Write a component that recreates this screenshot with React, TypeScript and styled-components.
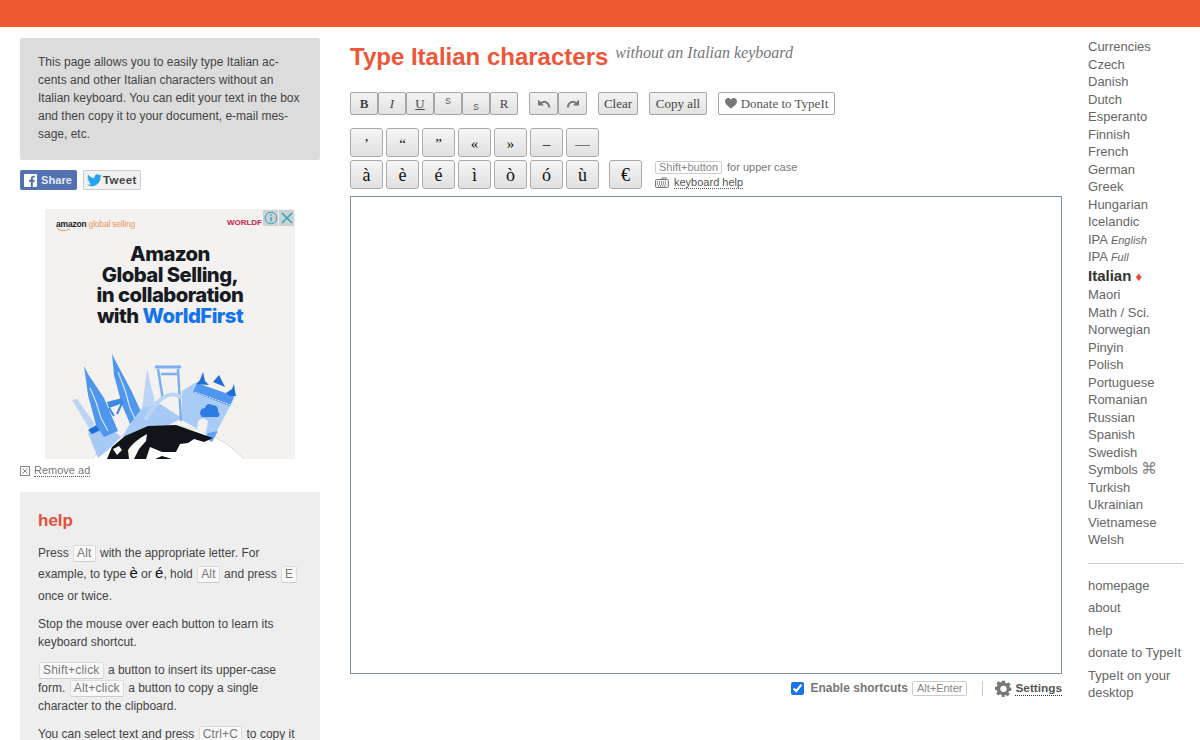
import React from "react";
import styled, { createGlobalStyle } from "styled-components";

const Global = createGlobalStyle`
  html, body { margin: 0; padding: 0; background: #fff; overflow: hidden; }
  body { font-family: "Liberation Sans", Arial, sans-serif; color: #444; }
`;

const Page = styled.div`height: 740px; overflow: hidden;`;
const TopBar = styled.div`height: 27px; background: #f05831;`;
const Columns = styled.div`
  display: grid;
  grid-template-columns: 300px 712px 95px;
  column-gap: 30px;
  padding: 11px 0 0 20px;
  & > nav { margin-left: -4px; }
`;
const Left = styled.aside`display: flex; flex-direction: column; align-items: flex-start;`;
const Intro = styled.div`
  box-sizing: border-box;
  width: 300px; height: 122px;
  padding: 15px 18px;
  background: #dcdcdc;
  border-radius: 2px;
  font-size: 12px;
  line-height: 18px;
  color: #444;
`;
const Social = styled.div`display: flex; gap: 6px; margin-top: 10px;`;
const Share = styled.div`
  box-sizing: border-box;
  width: 57px; height: 20px;
  display: flex; align-items: center; gap: 4px;
  padding-left: 4px;
  background: #5271b3;
  border-radius: 2px;
  color: #e4e8f4;
  font-size: 11px; font-weight: 700;
  letter-spacing: .1px;
`;
const Tweet = styled.div`
  box-sizing: border-box;
  width: 58px; height: 20px;
  display: flex; align-items: center; gap: 1px;
  padding-left: 3px;
  background: #f1f1f1;
  border: 1px solid #ccc;
  border-radius: 2px;
  color: #444;
  font-size: 11.5px; font-weight: 700;
  letter-spacing: .4px;
`;
const Ad = styled.div`
  position: relative;
  box-sizing: border-box;
  width: 250px; height: 250px;
  margin: 19px 0 0 25px;
  background: #f3f2f0;
  overflow: hidden;
  display: flex; flex-direction: column;
`;
const AdTop = styled.div`
  display: flex; justify-content: space-between; align-items: center;
  padding: 8px 33px 0 11px;
  height: 14px;
`;
const AdBrand = styled.span`
  position: relative;
  font-size: 8.5px; color: #e8975c; letter-spacing: -.2px;
  b { color: #222; }
  svg { position: absolute; left: 0; top: 9px; }
`;
const AdWorld = styled.span`font-size: 8px; font-weight: 700; color: #c8264f; margin-top: -3px;`;
const AdClose = styled.div`
  position: absolute; top: 1px; right: 1px;
  display: flex; gap: 1px;
`;
const AdIcon = styled.div`
  width: 15px; height: 16px;
  background: #cfd1d1;
  display: flex; align-items: center; justify-content: center;
`;
const AdHead = styled.div`
  margin-top: 13px;
  text-align: center;
  font-family: Inter, "Liberation Sans", sans-serif;
  font-size: 20.3px; font-weight: 800; line-height: 20.6px;
  letter-spacing: -.55px;
  color: #161a22;
  span { color: #1273eb; }
`;
const AdArt = styled.svg`display: block; margin-top: auto; flex: none;`;
const RemoveRow = styled.div`
  display: flex; align-items: center; gap: 4px;
  margin-top: 5px;
  font-size: 11px; color: #777;
`;
const Dotted = styled.span`border-bottom: 1px dotted #555; line-height: 12px;`;
const Help = styled.div`
  box-sizing: border-box;
  width: 300px;
  margin-top: 15px;
  padding: 18px 18px;
  background: #eee;
  border-radius: 2px;
  font-size: 12px;
  line-height: 18px;
  color: #444;
  h3 { margin: 0 0 11px; color: #e8503a; font-size: 17px; line-height: 22px; font-weight: 700; }
  p { margin: 0 0 10px; }
`;
const Kbd = styled.span`
  display: inline-block;
  padding: 0 3px;
  margin: 0 1px;
  line-height: 15px;
  letter-spacing: .2px;
  background: #f8f8f8;
  border: 1px solid #ddd;
  border-bottom-color: #ccc;
  border-radius: 2px;
  color: #777;
`;
const Tall = styled.span`line-height: 20px;`;
const AfterKeys = styled.span`display: block; margin-top: 3px;`;
const BigChar = styled.span`font-size: 15px; color: #111;`;

const Main = styled.main`display: flex; flex-direction: column; align-items: stretch;`;
const TitleRow = styled.div`display: flex; align-items: flex-start; gap: 7px; height: 44px;`;
const Title = styled.h1`
  margin: 4px 0 0;
  font-size: 24px; line-height: 30px; font-weight: 700;
  color: #ee5638;
`;
const Sub = styled.span`
  font-family: "Liberation Serif", serif;
  font-style: italic;
  font-size: 16px;
  line-height: 18px;
  margin-top: 6px;
  color: #777;
`;
const Toolbar = styled.div`display: flex; align-items: flex-start; margin-top: 10px;`;
const Fmt = styled.button<{ $w?: number; $ml?: number }>`
  box-sizing: border-box;
  width: ${p => p.$w ?? 28}px;
  height: 23px;
  margin-left: ${p => p.$ml ?? 0}px;
  padding: 0;
  display: flex; align-items: center; justify-content: center;
  background: linear-gradient(#f4f4f4, #e2e2e2);
  border: 1px solid #a6a6a6;
  border-radius: 2px;
  font-family: "Liberation Serif", serif;
  font-size: 13px;
  color: #444;
`;
const Donate = styled(Fmt)`background: #fff; gap: 4px; color: #555;`;
const Up = styled.span`font-family: "Liberation Sans", sans-serif; font-size: 8.5px; color: #555; transform: translateY(-3px);`;
const Low = styled.span`font-family: "Liberation Sans", sans-serif; font-size: 8.5px; color: #555; transform: translateY(3px);`;
const KeyRow = styled.div<{ $mt: number }>`display: flex; align-items: flex-start; gap: 3px; height: 29px; margin-top: ${p => p.$mt}px;`;
const Key = styled.button<{ $ml?: number; $big?: boolean }>`
  box-sizing: border-box;
  width: 33px; height: 29px;
  margin-left: ${p => p.$ml ?? 0}px;
  padding: ${p => (p.$big ? 2 : 4)}px 0 0;
  background: linear-gradient(#f5f5f5, #e1e1e1);
  border: 1px solid #aaa;
  border-radius: 3px;
  font-family: "Liberation Serif", serif;
  font-size: ${p => (p.$big ? 18 : 15)}px;
  color: #111;
`;
const Hints = styled.div`
  margin: 0 0 0 10px;
  font-size: 11px;
  line-height: 15px;
  color: #777;
  display: flex; flex-direction: column;
`;
const HintRow = styled.div`display: flex; align-items: center; gap: 5px; height: 15px; white-space: nowrap;`;
const KbdSmall = styled.span`
  padding: 0 3px;
  line-height: 11px;
  border: 1px solid #ccc;
  border-radius: 2px;
  color: #888;
`;
const HelpLink = styled(Dotted)`color: #555;`;
const Editor = styled.div`
  box-sizing: border-box;
  height: 478px;
  margin-top: 7px;
  border: 1px solid #7d94a8;
  background: #fff;
`;
const Footer = styled.div`
  display: flex; justify-content: flex-end; align-items: center;
  height: 16px;
  margin-top: 6px;
  font-size: 12px; font-weight: 700; color: #777;
`;
const Check = styled.input`
  width: 13px; height: 13px;
  margin: 0 7px 0 0;
  accent-color: #1a73e8;
`;
const FootKbd = styled.span`
  margin-left: 4px;
  padding: 0 4px;
  font-size: 11px; font-weight: 400; line-height: 13px;
  border: 1px solid #ccc;
  border-radius: 2px;
  color: #888;
`;
const Sep = styled.span`width: 1px; height: 15px; background: #ccc; margin: 0 12px 0 15px;`;
const SettingsLabel = styled.span`
  margin-left: 3px;
  color: #555;
  font-size: 11.8px;
  border-bottom: 1px dotted #333;
  line-height: 14px;
`;

const Nav = styled.nav`
  display: flex; flex-direction: column;
  font-size: 13px; color: #666;
`;
const NavItem = styled.div<{ $on?: boolean }>`
  height: ${p => (p.$on ? 20.5 : 17.5)}px;
  line-height: ${p => (p.$on ? 20.5 : 17.5)}px;
  white-space: nowrap;
  color: ${p => (p.$on ? "#333" : "#666")};
  font-size: ${p => (p.$on ? 15 : 13)}px;
  font-weight: ${p => (p.$on ? 700 : 400)};
  em { font-size: 11px; }
  i { font-style: normal; font-size: 13px; color: #e8503a; font-weight: 400; }
`;
const Cmd = styled.span`font-size: 16px; color: #888; line-height: 10px;`;
const NavRule = styled.div`height: 1px; width: 95px; background: #ccc; margin: 14px 0 13px;`;
const NavLink = styled.div`line-height: 17.5px; margin-bottom: 5px; color: #666; width: 95px;`;

const langs = ["Currencies","Czech","Danish","Dutch","Esperanto","Finnish","French","German","Greek","Hungarian","Icelandic"];
const langs2 = ["Maori","Math / Sci.","Norwegian","Pinyin","Polish","Portuguese","Romanian","Russian","Spanish","Swedish"];
const langs3 = ["Turkish","Ukrainian","Vietnamese","Welsh"];

const Undo = ({ flip }: { flip?: boolean }) => (
  <svg width="14" height="12" viewBox="0 0 14 12" style={flip ? { transform: "scaleX(-1)" } : undefined}>
    <path d="M1 1.500V7.500H7Z" fill="#777" />
    <path d="M3.800 5.200C7 2.500 11.500 3.500 12.300 9.500" fill="none" stroke="#777" strokeWidth="2" />
  </svg>
);

const Gear = () => (
  <svg width="17" height="17" viewBox="0 0 24 24">
    <path fill="#777" fillRule="evenodd" d="M10 1h4l.6 3.200 1.900.8L19.200 3.200 22 6l-1.800 2.700.8 1.900L23 11v4l-3.200.600-.8 1.900 1.800 2.700-2.800 2.800-2.700-1.800-1.900.8L13.700 24h-4l-.6-3.200-1.900-.8-2.700 1.800L1.700 19l1.800-2.700-.8-1.900L0 13.800v-4l2.900-.6.8-1.900L2 4.600 4.800 1.800l2.700 1.800 1.900-.8ZM12 8a4.500 4.500 0 1 0 0 9 4.500 4.500 0 0 0 0-9Z" />
  </svg>
);

const Keyboard = () => (
  <svg width="14" height="11" viewBox="0 0 14 11">
    <rect x=".5" y="2.500" width="13" height="8" rx="1" fill="#eee" stroke="#777" />
    <path d="M2 5h10M2 7h10M3 9h8" stroke="#555" strokeDasharray="1 1" />
    <path d="M7 2.500V1h5" stroke="#777" fill="none" />
  </svg>
);

/* viewBox uses page coordinates so shapes line up with the reference */
const AdIllustration = () => (
  <AdArt width="250" height="109" viewBox="45 350 250 109">
    <circle cx="168" cy="530" r="104" fill="#fff" stroke="#ddd8cc" />
    {/* pale left tower */}
    <path d="M72 400 L77 399 L95 424 L90 430Z" fill="#bcd5f6" />
    {/* base */}
    <path d="M88 433 L106 424 L121 437 L108 450 L98 458Z" fill="#a6c9f5" />
    <path d="M88 430 L98 424 L103 429 L92 434Z" fill="#1f6fd8" />
    {/* twin towers */}
    <path d="M84 366 L88 374 L104 398 L118 431 L104 437 L96 425 L88 395Z" fill="#4f97ee" />
    <path d="M90 388 L96 402 L101 418 L108 431" stroke="#d3e5fb" strokeWidth="1.200" fill="none" />
    <path d="M112 354 L116 362 L131 390 L144 418 L131 426 L122 405 L114 375Z" fill="#4f97ee" />
    <path d="M118 372 L125 390 L130 408 L136 421" stroke="#d3e5fb" strokeWidth="1.200" fill="none" />
    <path d="M107 402 L122 398 L123 403 L109 408Z" fill="#3d88e6" />
    <path d="M109 408 L114 416 M122 403 L117 414" stroke="#3d88e6" strokeWidth="2" fill="none" />
    {/* temple spire */}
    <path d="M147 369 L156 407 L142 409Z" fill="#bcd5f6" />
    <path d="M142 408 L160 404 L182 418 L165 427 L122 437 L130 424Z" fill="#a6c9f5" />
    {/* gate */}
    <path d="M155 367 H181" stroke="#7eb0ef" strokeWidth="3" />
    <path d="M158 369 L163 400 M178 369 L181 421 M161 374 H177" stroke="#7eb0ef" strokeWidth="2.500" fill="none" />
    <path d="M145 420 Q165 385 182 398" stroke="#bcd5f6" strokeWidth="4" fill="none" />
    {/* victory arch */}
    <path d="M182 391 L195 383 L235 397 L213 438 L182 420Z" fill="#a9ccf6" />
    <path d="M197 383 L234 396 L230 406 L193 392Z" fill="#4f97ee" />
    <path d="M195 392 L231 405" stroke="#dcebfc" strokeWidth="1" strokeDasharray="2 1" />
    <path d="M196 384 L200 380 L203 372 L205 381 L209 385Z M213 382 L219 375 L223 383 L225 387Z M226 393 L232 389 L234 384 L235 391 L236 396 L230 396Z" fill="#1f6fd8" />
    <path d="M200 414 Q200 408 205 408 Q207 402 212 405 Q219 405 218 412 Q221 414 218 417 L202 417Z" fill="#2b7be0" />
    <path d="M197 431 L198 421 Q203 416 208 421 L206 433Z" fill="#f3f2f0" />
    <path d="M208 433 L218 431 L212 442 L205 438Z" fill="#5fa3f0" />
    {/* globe */}
    <path d="M107 459 L112 447 L125 436 L148 426 L176 425 L213 438 L204 442 L194 439 L188 443 L180 444 L176 452 L162 452 L150 447 L146 459Z M155 459 L162 456 L172 459Z" fill="#11151a" />
    <path d="M128 450 Q134 441 147 434 L146 441 L139 449 L134 459 L129 459Z M113 449 L119 446 L122 450 L117 455Z" fill="#f8f8f7" />
  </AdArt>
);

export default function App() {
  return (
    <Page>
      <Global />
      <TopBar />
      <Columns>
        <Left>
          <Intro>
            This page allows you to easily type Italian ac-<br />
            cents and other Italian characters without an<br />
            Italian keyboard. You can edit your text in the box<br />
            and then copy it to your document, e-mail mes-<br />
            sage, etc.
          </Intro>
          <Social>
            <Share>
              <svg width="13" height="13" viewBox="0 0 14 14">
                <rect width="14" height="14" rx="1" fill="#fff" />
                <path d="M9.500 14V8.500h1.800l.3-2.200H9.500V5c0-.7.2-1.100 1.100-1.100h1.100V2c-.3 0-.9-.1-1.600-.1-1.600 0-2.700 1-2.700 2.800v1.600H5.600v2.200h1.800V14Z" fill="#5271b3" />
              </svg>
              Share
            </Share>
            <Tweet>
              <svg width="15" height="13" viewBox="0 0 24 20">
                <path fill="#2aa3ef" d="M24 2.400c-.9.400-1.800.7-2.800.8 1-.6 1.800-1.600 2.200-2.700-1 .6-2 1-3.100 1.200A4.900 4.900 0 0 0 11.900 6.200C7.800 6 4.200 4.100 1.700.9c-1.300 2.300-.6 5.100 1.500 6.500-.8 0-1.500-.2-2.200-.6 0 2.300 1.600 4.400 3.900 4.900-.7.200-1.500.2-2.200.1.600 2 2.400 3.400 4.600 3.400A9.900 9.900 0 0 1 0 16.700 14 14 0 0 0 21.500 4.300c1-.7 1.800-1.500 2.500-1.900Z" />
              </svg>
              Tweet
            </Tweet>
          </Social>
          <Ad>
            <AdTop>
              <AdBrand>
                <b>amazon</b> global selling
                <svg width="15" height="4" viewBox="0 0 15 4"><path d="M1 .5Q7 4.500 14 1" stroke="#e8975c" fill="none" /></svg>
              </AdBrand>
              <AdWorld>WORLDF</AdWorld>
            </AdTop>
            <AdClose>
              <AdIcon>
                <svg width="14" height="14" viewBox="0 0 14 14">
                  <circle cx="7" cy="7" r="5.800" fill="none" stroke="#2aa8c4" />
                  <path d="M7 6v4.500M7 3.200v1.600" stroke="#2aa8c4" strokeWidth="1.400" />
                </svg>
              </AdIcon>
              <AdIcon>
                <svg width="12" height="12" viewBox="0 0 12 12">
                  <path d="M1 1l10 10M11 1L1 11" stroke="#2aa8c4" strokeWidth="1.500" />
                </svg>
              </AdIcon>
            </AdClose>
            <AdHead>
              Amazon<br />Global Selling,<br />in collaboration<br />with <span>WorldFirst</span>
            </AdHead>
            <AdIllustration />
          </Ad>
          <RemoveRow>
            <svg width="10" height="10" viewBox="0 0 10 10">
              <rect x=".5" y=".5" width="9" height="9" fill="none" stroke="#888" />
              <path d="M2.500 2.500l5 5M7.500 2.500l-5 5" stroke="#888" />
            </svg>
            <Dotted>Remove ad</Dotted>
          </RemoveRow>
          <Help>
            <h3>help</h3>
            <p>
              <Tall>Press <Kbd>Alt</Kbd> with the appropriate letter. For<br />
              example, to type <BigChar>è</BigChar> or <BigChar>é</BigChar>, hold <Kbd>Alt</Kbd> and press <Kbd>E</Kbd></Tall>
              <AfterKeys>once or twice.</AfterKeys>
            </p>
            <p>Stop the mouse over each button to learn its<br />keyboard shortcut.</p>
            <p><Kbd>Shift+click</Kbd> a button to insert its upper-case<br />form. <Kbd>Alt+click</Kbd> a button to copy a single<br />character to the clipboard.</p>
            <p>You can select text and press <Kbd>Ctrl+C</Kbd> to copy it</p>
          </Help>
        </Left>
        <Main>
          <TitleRow>
            <Title>Type Italian characters</Title>
            <Sub>without an Italian keyboard</Sub>
          </TitleRow>
          <Toolbar>
            <Fmt><b>B</b></Fmt>
            <Fmt><i>I</i></Fmt>
            <Fmt><u>U</u></Fmt>
            <Fmt><Up>S</Up></Fmt>
            <Fmt><Low>S</Low></Fmt>
            <Fmt>R</Fmt>
            <Fmt $ml={11} $w={29}><Undo /></Fmt>
            <Fmt $w={29}><Undo flip /></Fmt>
            <Fmt $ml={11} $w={40}>Clear</Fmt>
            <Fmt $ml={11} $w={58}>Copy all</Fmt>
            <Donate $ml={11} $w={117}>
              <svg width="12" height="11" viewBox="0 0 12 11">
                <path d="M6 10.500C2 7.500 0 5.500 0 3.200 0 1.300 1.400 0 3.100 0 4.300 0 5.400.6 6 1.700 6.600.6 7.700 0 8.900 0 10.600 0 12 1.300 12 3.200c0 2.300-2 4.300-6 7.300Z" fill="#777" />
              </svg>
              Donate to TypeIt
            </Donate>
          </Toolbar>
          <KeyRow $mt={13}>
            <Key>’</Key><Key>“</Key><Key>”</Key><Key>«</Key><Key>»</Key><Key>–</Key><Key>—</Key>
          </KeyRow>
          <KeyRow $mt={3}>
            <Key $big>à</Key><Key $big>è</Key><Key $big>é</Key><Key $big>ì</Key><Key $big>ò</Key><Key $big>ó</Key><Key $big>ù</Key>
            <Key $big $ml={7}>€</Key>
            <Hints>
              <HintRow><KbdSmall>Shift+button</KbdSmall> for upper case</HintRow>
              <HintRow><Keyboard /> <HelpLink>keyboard help</HelpLink></HintRow>
            </Hints>
          </KeyRow>
          <Editor />
          <Footer>
            <Check type="checkbox" defaultChecked readOnly />
            Enable shortcuts
            <FootKbd>Alt+Enter</FootKbd>
            <Sep />
            <Gear />
            <SettingsLabel>Settings</SettingsLabel>
          </Footer>
        </Main>
        <Nav>
          {langs.map(l => <NavItem key={l}>{l}</NavItem>)}
          <NavItem>IPA <em>English</em></NavItem>
          <NavItem>IPA <em>Full</em></NavItem>
          <NavItem $on>Italian <i>♦</i></NavItem>
          {langs2.map(l => <NavItem key={l}>{l}</NavItem>)}
          <NavItem>Symbols <Cmd>⌘</Cmd></NavItem>
          {langs3.map(l => <NavItem key={l}>{l}</NavItem>)}
          <NavRule />
          <NavLink>homepage</NavLink>
          <NavLink>about</NavLink>
          <NavLink>help</NavLink>
          <NavLink>donate to TypeIt</NavLink>
          <NavLink>TypeIt on your desktop</NavLink>
        </Nav>
      </Columns>
    </Page>
  );
}
